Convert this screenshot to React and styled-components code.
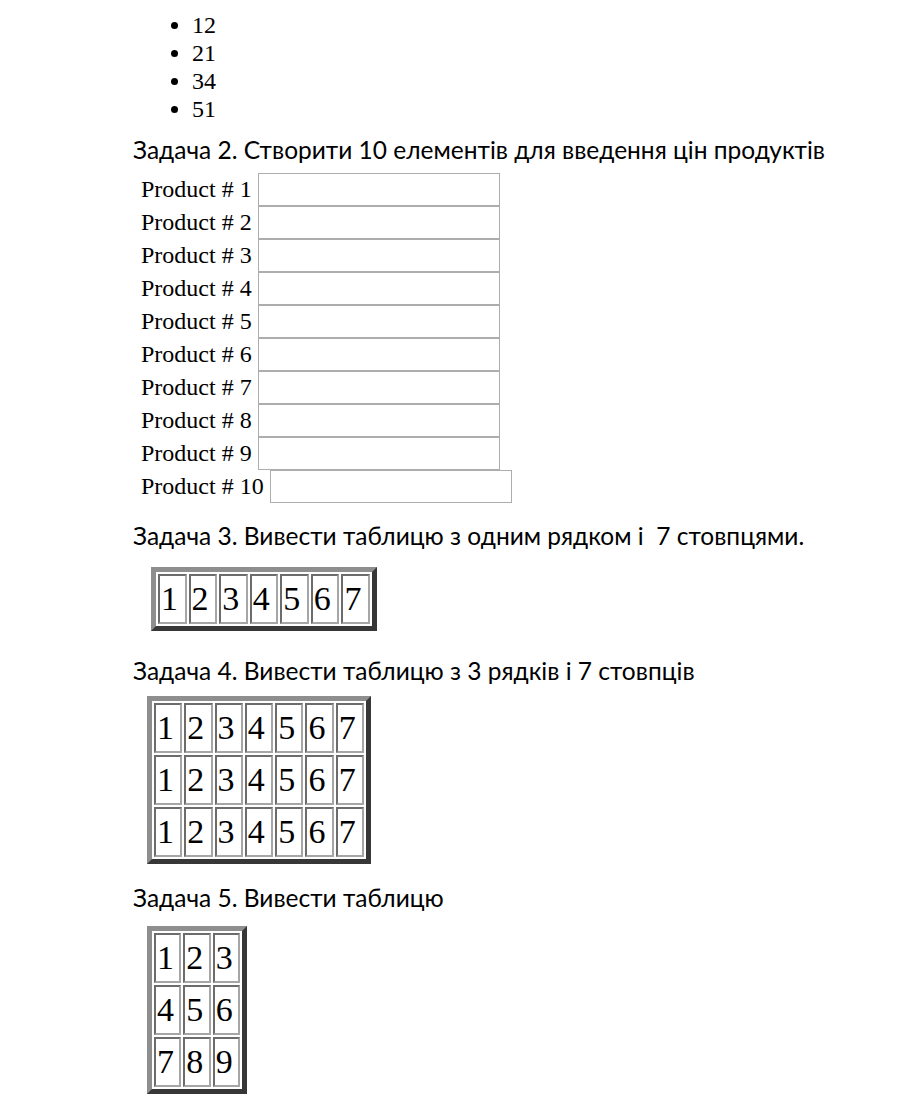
import styled, { createGlobalStyle } from 'styled-components';

const GlobalStyle = createGlobalStyle`
  body {
    margin: 0;
    background: #ffffff;
    color: #000000;
  }
`;

const Page = styled.div`
  display: flex;
  flex-direction: column;
  align-items: flex-start;
  padding: 0 0 40px 133px;
`;

const NumberList = styled.ul`
  margin: 11px 0 0;
  padding-left: 59px;
  font-family: "Liberation Serif", "Times New Roman", serif;
  font-size: 24px;
  line-height: 28px;
`;

const Heading = styled.p`
  margin: ${(p) => p.$top}px 0 0;
  font-family: Lato, "Liberation Sans", sans-serif;
  font-size: 24.5px;
  line-height: 28px;
  white-space: pre;
`;

const ProductForm = styled.form`
  display: flex;
  flex-direction: column;
  margin-top: 9px;
  padding-left: 8px;
`;

const ProductRow = styled.div`
  display: flex;
  align-items: center;
  gap: 6px;
  height: 33px;
`;

const ProductLabel = styled.label`
  font-family: "Liberation Serif", "Times New Roman", serif;
  font-size: 24px;
`;

const PriceInput = styled.input`
  box-sizing: border-box;
  width: 242px;
  height: 33px;
  margin: 0;
  padding: 2px 4px;
  border: 1px solid #adadad;
  background: #ffffff;
  font-size: 16px;
`;

const GridTable = styled.table`
  width: ${(p) => p.$width}px;
  margin: ${(p) => p.$top}px 0 0 ${(p) => p.$left}px;
  border-collapse: separate;
  border-spacing: 2.5px;
  border: 5px solid;
  border-color: #8e8e8e #373737 #373737 #8e8e8e;
`;

const Cell = styled.td`
  height: 46px;
  padding: 0 1px;
  border: 2px solid;
  border-color: #6c6c6c #a6a6a6 #a6a6a6 #6c6c6c;
  font-family: "Liberation Serif", "Times New Roman", serif;
  font-size: 34px;
  line-height: 46px;
  text-align: left;
  vertical-align: middle;
`;

const NumberGrid = ({ rows, top, left, width }) => (
  <GridTable $top={top} $left={left} $width={width}>
    <tbody>
      {rows.map((row, i) => (
        <tr key={i}>
          {row.map((n, j) => (
            <Cell key={j}>{n}</Cell>
          ))}
        </tr>
      ))}
    </tbody>
  </GridTable>
);

const seven = [1, 2, 3, 4, 5, 6, 7];

const App = () => {
  const products = Array.from({ length: 10 }, (_, i) => i + 1);

  return (
    <>
      <GlobalStyle />
      <Page>
        <NumberList>
          <li>12</li>
          <li>21</li>
          <li>34</li>
          <li>51</li>
        </NumberList>

        <Heading $top={13}>Задача 2. Створити 10 елементів для введення цін продуктів</Heading>
        <ProductForm>
          {products.map((n) => (
            <ProductRow key={n}>
              <ProductLabel htmlFor={`price-${n}`}>Product # {n}</ProductLabel>
              <PriceInput id={`price-${n}`} type="text" />
            </ProductRow>
          ))}
        </ProductForm>

        <Heading $top={19}>Задача 3. Вивести таблицю з одним рядком і  7 стовпцями.</Heading>
        <NumberGrid rows={[seven]} top={17} left={18} width={226} />

        <Heading $top={26}>Задача 4. Вивести таблицю з 3 рядків і 7 стовпців</Heading>
        <NumberGrid rows={[seven, seven, seven]} top={11} left={14} width={224} />

        <Heading $top={20}>Задача 5. Вивести таблицю</Heading>
        <NumberGrid rows={[[1, 2, 3], [4, 5, 6], [7, 8, 9]]} top={14} left={14} width={100} />
      </Page>
    </>
  );
};

export default App;
